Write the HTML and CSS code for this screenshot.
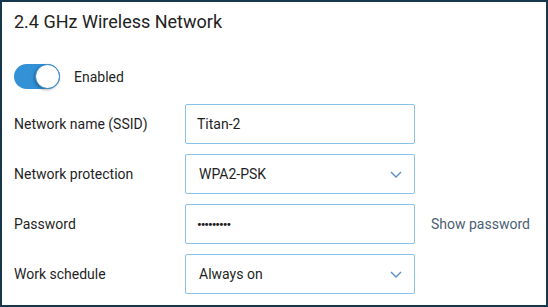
FILE: index.html
```html
<!DOCTYPE html>
<html>
<head>
   <meta charset="UTF-8">
   <title>2.4 GHz Wireless Network</title>
   <meta name="viewport" content="width=device-width, initial-scale=1.0">
   <link rel="stylesheet" href="styles.css">
</head>
<body>
   <div class="card">
      <h1>2.4 GHz Wireless Network</h1>

      <label class="switch-row">
         <span class="switch"><span class="knob"></span></span>
         <span class="switch-text">Enabled</span>
      </label>

      <div class="form">
         <div class="row">
            <label for="ssid">Network name (SSID)</label>
            <input type="text" id="ssid" value="Titan-2">
         </div>
         <div class="row">
            <label for="protection">Network protection</label>
            <div class="select">
               <span>WPA2-PSK</span>
               <svg width="12" height="7" viewBox="0 0 12 7"><path d="M1 1l5 5 5-5" fill="none" stroke="#5b8fc7" stroke-width="1.4"/></svg>
            </div>
         </div>
         <div class="row">
            <label for="password">Password</label>
            <input type="password" id="password" value="123456789">
            <a class="show-link" href="#">Show password</a>
         </div>
         <div class="row">
            <label for="schedule">Work schedule</label>
            <div class="select">
               <span>Always on</span>
               <svg width="12" height="7" viewBox="0 0 12 7"><path d="M1 1l5 5 5-5" fill="none" stroke="#5b8fc7" stroke-width="1.4"/></svg>
            </div>
         </div>
      </div>
   </div>
</body>
</html>
```

FILE: styles.css
```css
      html, body {
         margin: 0;
         height: 100%;
      }
      body {
         background-color: #17374f;
         font-family: Roboto, "Liberation Sans", sans-serif;
         color: #1f1f1f;
         padding: 2px;
         box-sizing: border-box;
      }
      .card {
         background-color: #fff;
         height: 100%;
         padding: 8px 12px;
         box-sizing: border-box;
      }
      h1 {
         font-size: 18px;
         font-weight: normal;
         line-height: 24px;
         margin: 0;
         color: #222;
      }
      .switch-row {
         display: flex;
         align-items: center;
         margin-top: 30px;
         font-size: 14px;
      }
      .switch {
         width: 46px;
         height: 25px;
         border-radius: 13px;
         background-color: #3391d6;
         display: flex;
         justify-content: flex-end;
      }
      .knob {
         width: 23px;
         height: 23px;
         border-radius: 50%;
         background-color: #fff;
         border: 1px solid #2f86c8;
         box-shadow: -1px 1px 3px rgba(0, 0, 0, 0.3);
      }
      .switch-text {
         margin-left: 14px;
      }
      .form {
         margin-top: 15px;
         display: flex;
         flex-direction: column;
         gap: 10px;
      }
      .row {
         display: flex;
         align-items: center;
         height: 40px;
         font-size: 14px;
      }
      .row label {
         width: 171px;
      }
      input[type="text"], input[type="password"], .select {
         width: 230px;
         height: 40px;
         box-sizing: border-box;
         border: 1px solid #86c2ea;
         border-radius: 2px;
         font-family: Roboto, "Liberation Sans", sans-serif;
         font-size: 14px;
         color: #1f1f1f;
         margin: 0;
         outline: none;
      }
      input[type="text"], input[type="password"] {
         padding: 0 11px;
      }
      input[type="password"] {
         font-size: 13px;
         font-weight: bold;
         letter-spacing: -1px;
      }
      .select {
         display: flex;
         align-items: center;
         justify-content: space-between;
         padding: 0 12px 0 13px;
      }
      .show-link {
         margin-left: 16px;
         color: #4b6072;
         text-decoration: none;
      }
```
